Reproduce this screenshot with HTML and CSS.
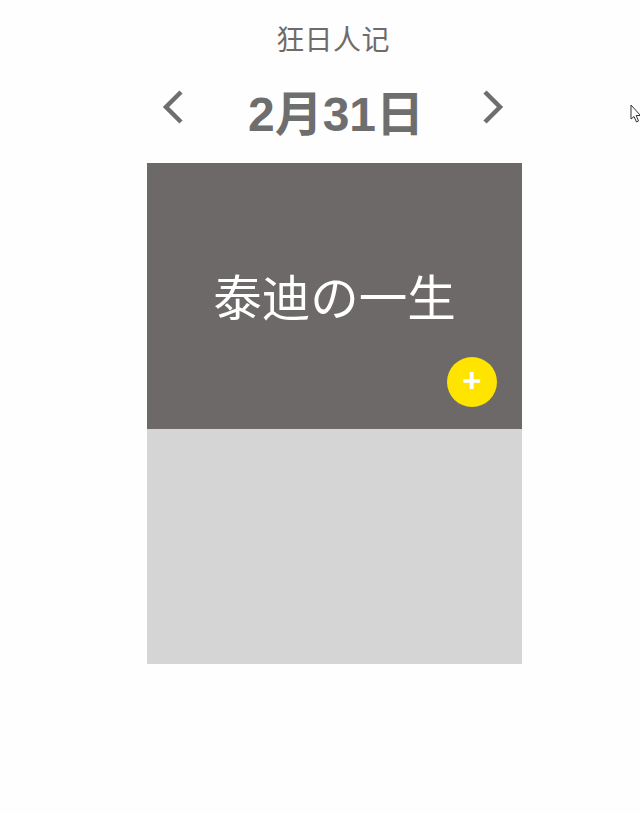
FILE: index.html
```html
<!DOCTYPE html>
<html>
<head>
    <meta charset="UTF-8">
    <title>狂日人记</title>
    <link rel="stylesheet" href="styles.css">
</head>
<body>
    <div class="container">
        <div class="app-title">狂日人记</div>
        <div class="date-bar">
            <svg class="arrow" width="24" height="36" viewBox="0 0 24 36" fill="none" stroke="#6e6e6e" stroke-width="4.5">
                <path d="M21 3 L6 18 L21 33"/>
            </svg>
            <span class="date">2月31日</span>
            <svg class="arrow" width="24" height="36" viewBox="0 0 24 36" fill="none" stroke="#6e6e6e" stroke-width="4.5">
                <path d="M3 3 L18 18 L3 33"/>
            </svg>
        </div>
        <div class="card">
            <div class="cover">
                <span class="cover-title">泰迪の一生</span>
                <div class="add-btn">+</div>
            </div>
            <div class="cover-bottom"></div>
        </div>
    </div>
    <svg class="cursor" width="12" height="20" viewBox="0 0 12 20" fill="#fff" stroke="#333" stroke-width="1">
        <path d="M1 1 L1 15 L4 12.5 L6.5 18 L8.5 17 L6.2 11.5 L10.5 11.5 Z"/>
    </svg>
</body>
</html>
```

FILE: styles.css
```css
* {
    margin: 0;
    padding: 0;
    box-sizing: border-box;
    font-family: "Liberation Sans", "Noto Sans CJK SC", sans-serif;
}

body {
    background: #fefefe;
    height: 813px;
    overflow: hidden;
}

.container {
    width: 375px;
    margin-left: 147px;
    display: flex;
    flex-direction: column;
    align-items: center;
}

.app-title {
    margin-top: 24px;
    margin-right: 3px;
    font-size: 28px;
    letter-spacing: 0.4px;
    line-height: 34px;
    color: #6e6b6a;
}

.date-bar {
    width: 100%;
    height: 105px;
    display: flex;
    align-items: center;
    justify-content: space-between;
    padding: 0 16px 7px 13px;
}

.date {
    margin: 6px 0 0 6px;
    font-size: 48px;
    font-weight: 700;
    color: #6e6e6e;
}

.card {
    width: 100%;
}

.cover {
    position: relative;
    height: 266px;
    background: #6c6968;
    display: flex;
    align-items: center;
    justify-content: center;
}

.cover-title {
    font-size: 48.5px;
    color: #fff;
    margin-top: -3px;
}

.add-btn {
    position: absolute;
    right: 25px;
    bottom: 22px;
    width: 50px;
    height: 50px;
    border-radius: 50%;
    background: #ffe400;
    color: #fff;
    font-size: 33px;
    font-weight: 700;
    line-height: 48px;
    text-align: center;
}

.cover-bottom {
    height: 235px;
    background: #d5d5d5;
}

.cursor {
    position: absolute;
    left: 630px;
    top: 104px;
}
```
